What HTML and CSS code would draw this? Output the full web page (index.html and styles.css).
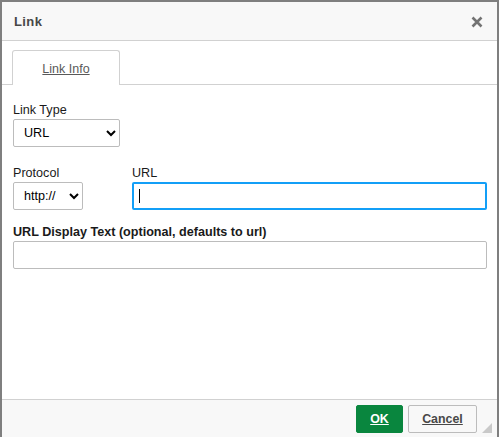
FILE: index.html
```html
<!DOCTYPE html>
<html>
<head>
<meta charset="utf-8">
<link rel="stylesheet" href="styles.css">
</head>
<body>
<div class="dialog">
  <div class="titlebar">
    <span class="title">Link</span>
    <svg class="close" width="12" height="12" viewBox="0 0 12 12"><path d="M1.5 1.5 L10.5 10.5 M10.5 1.5 L1.5 10.5" stroke="#737373" stroke-width="2.6" stroke-linecap="butt"/></svg>
  </div>
  <div class="tabs">
    <div class="tab"><span>Link Info</span></div>
  </div>
  <div class="content">
    <div class="field">
      <label class="label">Link Type</label>
      <select class="select sel-type"><option>URL</option></select>
    </div>
    <div class="row">
      <div class="field">
        <label class="label">Protocol</label>
        <select class="select sel-proto"><option>http://</option></select>
      </div>
      <div class="field grow">
        <label class="label">URL</label>
        <div class="inputwrap">
          <input class="input focused" type="text">
          <span class="caret"></span>
        </div>
      </div>
    </div>
    <div class="field">
      <label class="label bold">URL Display Text (optional, defaults to url)</label>
      <input class="input" type="text">
    </div>
  </div>
  <div class="footer">
    <button class="btn ok">OK</button>
    <button class="btn cancel">Cancel</button>
    <span class="resize"></span>
  </div>
</div>
</body>
</html>
```

FILE: styles.css
```css
html, body {
  margin: 0;
  padding: 0;
  overflow: hidden;
  background: #7f7f7f;
}
body {
  width: 499px;
  height: 437px;
  font-family: "Liberation Sans", Arial, sans-serif;
  font-size: 12px;
}
.dialog {
  box-sizing: border-box;
  width: 499px;
  height: 446px;
  border: 2px solid #7f7f7f;
  background: #fff;
  display: flex;
  flex-direction: column;
}
.titlebar {
  height: 38px;
  flex: none;
  background: #f8f8f8;
  border-bottom: 1px solid #d1d1d1;
  display: flex;
  align-items: center;
  justify-content: space-between;
  padding: 0 14px 0 12px;
}
.title {
  font-weight: bold;
  font-size: 13px;
  letter-spacing: 0.4px;
  color: #474747;
}
.close {
  display: block;
  margin-top: 1px;
}
.tabs {
  height: 34px;
  flex: none;
  padding: 9px 0 0 10px;
  border-bottom: 1px solid #d1d1d1;
  display: flex;
  align-items: flex-end;
}
.tab {
  box-sizing: border-box;
  width: 108px;
  height: 35px;
  margin-bottom: -1px;
  border: 1px solid #d1d1d1;
  border-bottom: none;
  border-radius: 3px 3px 0 0;
  background: #fff;
  display: flex;
  align-items: center;
  justify-content: center;
  color: #595959;
  font-size: 12.5px;
  padding-top: 1px;
}
.tab span {
  text-decoration: underline;
}
.content {
  flex: 1;
  padding: 18px 10px 0 11px;
  display: flex;
  flex-direction: column;
}
.field {
  display: flex;
  flex-direction: column;
  align-items: flex-start;
}
.row {
  display: flex;
  gap: 49px;
  margin-top: 19px;
}
.row + .field {
  margin-top: 15px;
}
.grow {
  flex: 1;
  align-items: stretch;
}
.label {
  display: block;
  line-height: 16px;
  height: 16px;
  color: #1a1a1a;
  font-size: 12.6px;
  margin-top: -1px;
  margin-bottom: 1px;
}
.bold {
  font-weight: bold;
}
.select {
  box-sizing: border-box;
  height: 28px;
  border: 1px solid #bcbcbc;
  border-radius: 2px;
  background: #fff;
  font-family: "Liberation Sans", Arial, sans-serif;
  font-size: 12.6px;
  color: #000;
  padding: 0 4px 0 6px;
  margin: 0;
}
.sel-type {
  width: 107px;
}
.sel-proto {
  width: 70px;
}
.inputwrap {
  position: relative;
  display: flex;
}
.input {
  box-sizing: border-box;
  width: 100%;
  height: 28px;
  border: 1px solid #bcbcbc;
  border-radius: 2px;
  background: #fff;
  margin: 0;
  padding: 0 6px;
  font-family: "Liberation Sans", Arial, sans-serif;
  font-size: 12px;
  outline: none;
}
.input.focused {
  border: 2px solid #139ff7;
}
.caret {
  position: absolute;
  left: 7px;
  top: 7px;
  width: 1px;
  height: 14px;
  background: #000;
}
.footer {
  flex: none;
  position: relative;
  height: 39px;
  background: #f8f8f8;
  border-top: 1px solid #d1d1d1;
  display: flex;
  justify-content: flex-end;
  align-items: flex-start;
  gap: 5px;
  padding: 5px 20px 0 0;
}
.btn {
  box-sizing: border-box;
  height: 28px;
  margin: 0;
  border-radius: 2px;
  font-family: "Liberation Sans", Arial, sans-serif;
  font-size: 12.4px;
  font-weight: bold;
  text-decoration: underline;
  padding: 0;
}
.ok {
  width: 47px;
  background: #09863e;
  border: 1px solid #09863e;
  color: #fff;
}
.cancel {
  width: 69px;
  background: #f8f8f8;
  border: 1px solid #bcbcbc;
  color: #484848;
}
.resize {
  position: absolute;
  right: 5px;
  top: 23px;
  width: 0;
  height: 0;
  border-style: solid;
  border-width: 0 0 10px 10px;
  border-color: transparent transparent #c9c9c9 transparent;
}
```
